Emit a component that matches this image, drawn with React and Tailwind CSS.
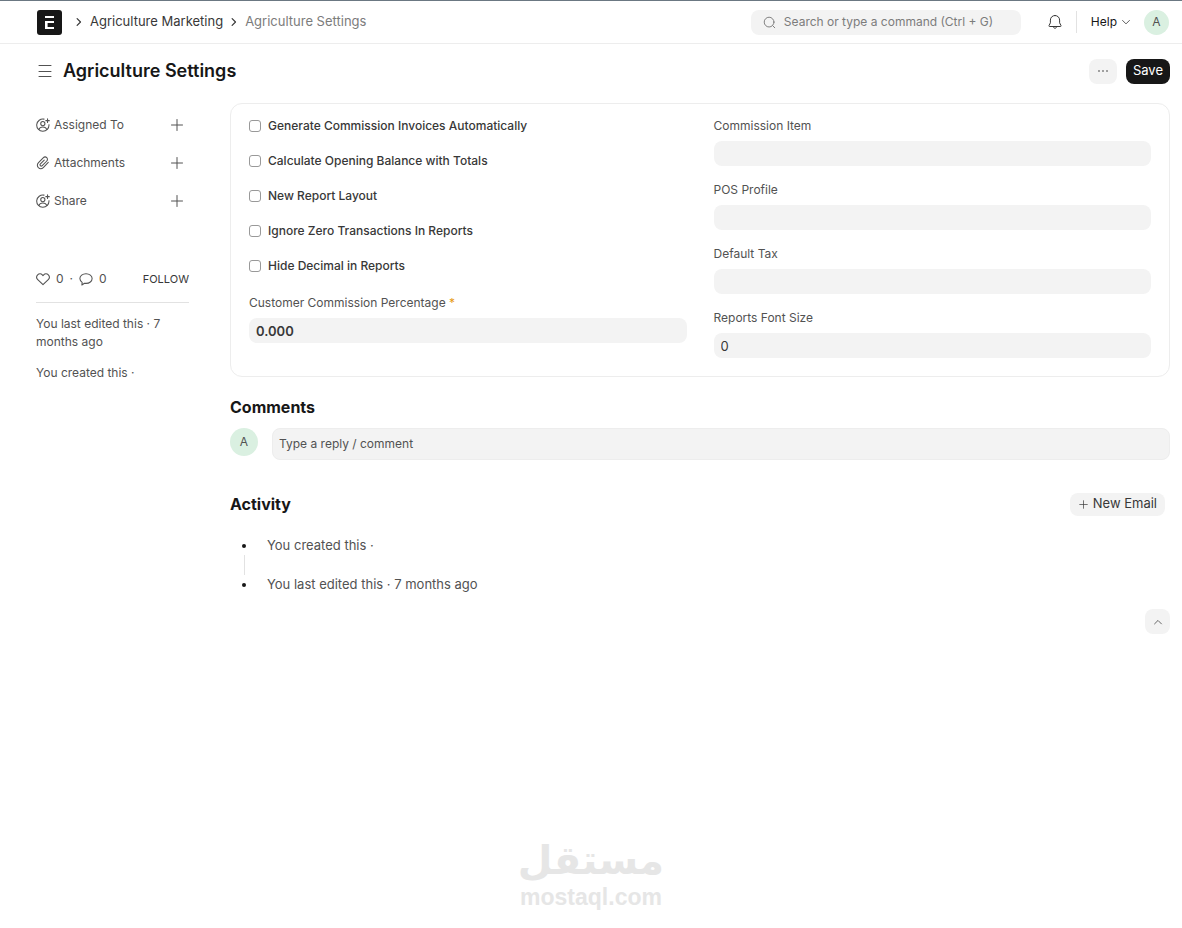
import { useState } from "react";

const checks = [
  { name: "auto_invoices", label: "Generate Commission Invoices Automatically" },
  { name: "opening_balance", label: "Calculate Opening Balance with Totals" },
  { name: "new_layout", label: "New Report Layout" },
  { name: "ignore_zero", label: "Ignore Zero Transactions In Reports" },
  { name: "hide_decimal", label: "Hide Decimal in Reports" },
];

const fields = [
  { name: "commission_item", label: "Commission Item" },
  { name: "pos_profile", label: "POS Profile" },
  { name: "default_tax", label: "Default Tax" },
  { name: "font_size", label: "Reports Font Size" },
];

function Icon({ className, children }) {
  return (
    <svg
      viewBox="0 0 16 16"
      fill="none"
      stroke="currentColor"
      strokeLinecap="round"
      strokeLinejoin="round"
      aria-hidden="true"
      className={`shrink-0 ${className}`}
    >
      {children}
    </svg>
  );
}

function PlusIcon({ className }) {
  return (
    <Icon className={className}>
      <path d="M8 2.5v11M2.5 8h11" />
    </Icon>
  );
}

function ChevronRight() {
  return (
    <Icon className="size-3 text-[#383838]">
      <path d="M5.500 3.500l4.500 4.500-4.500 4.500" strokeWidth="1.600" />
    </Icon>
  );
}

function AssignIcon() {
  return (
    <Icon className="size-[14px]">
      <path d="M9.2 1.3A7 7 0 1 0 14.8 7.6" strokeWidth="1.2" />
      <circle cx="7.8" cy="6.4" r="2.4" strokeWidth="1.2" />
      <path d="M3.2 13.2c.7-2 2.4-3 4.6-3s3.9 1 4.6 3" strokeWidth="1.2" />
      <path d="M13.2 1v4M11.2 3h4" strokeWidth="1.2" />
    </Icon>
  );
}

function ClipIcon() {
  return (
    <Icon className="size-[14px]">
      <path
        d="M14 7.3 8.6 12.9c-1.700 1.700-4.300 1.900-5.900.4-1.600-1.600-1.500-4.100.2-5.800l5.300-5.400c1.200-1.200 3-1.300 4.100-.2 1.100 1.100 1 2.900-.2 4.100L7.100 11c-.6.6-1.500.7-2.100.1-.6-.6-.5-1.500.1-2.100l4.300-4.400"
        strokeWidth="1.2"
      />
    </Icon>
  );
}

function SidebarItem({ icon, label }) {
  return (
    <li className="flex h-[38px] items-center gap-1 pr-1">
      {icon}
      <span className="flex-1">{label}</span>
      <button type="button" aria-label={`Add ${label}`} className="cursor-pointer">
        <PlusIcon className="size-4" />
      </button>
    </li>
  );
}

function Field({ name, label, value, onChange, required, bold }) {
  return (
    <div className="flex flex-col gap-[7px]">
      <label htmlFor={name} className="text-xs text-[#525252]">
        {label}
        {required && <span className="text-[#e79913]"> *</span>}
      </label>
      <input
        id={name}
        name={name}
        type="text"
        value={value}
        onChange={onChange}
        className={
          bold
            ? "h-[25px] w-full rounded-lg bg-[#f3f3f3] px-[7px] text-[13px] font-semibold text-[#383838]"
            : "h-[25px] w-full rounded-lg bg-[#f3f3f3] px-[7px] text-[13px] text-[#383838]"
        }
      />
    </div>
  );
}

export default function App() {
  const [form, setForm] = useState({
    commission_item: "",
    pos_profile: "",
    default_tax: "",
    font_size: "0",
    commission_percentage: "0.000",
  });

  const handleChange = (e) => {
    setForm((prev) => ({ ...prev, [e.target.name]: e.target.value }));
  };

  return (
    <div className="flex min-h-screen flex-col border-t border-[#6b7882] bg-white font-[Inter,sans-serif] text-[13px] text-[#383838]">
      {/* Navbar */}
      <header className="flex h-[43px] items-center border-b border-[#ededed] pr-[13px] pl-[37px]">
        <a href="#home" aria-label="Home">
          <svg viewBox="0 0 25 25" className="size-[25px]" aria-hidden="true">
            <rect width="25" height="25" rx="3" fill="#171717" />
            <path d="M8 6h9v2H8zM8 11h9v2h-6.400v4H17v2H8z" fill="#fff" />
          </svg>
        </a>
        <nav className="ml-[11px] flex items-center gap-[5px]">
          <ChevronRight />
          <a href="#marketing">Agriculture Marketing</a>
          <ChevronRight />
          <a href="#settings" className="text-[#7c7c7c]">
            Agriculture Settings
          </a>
        </nav>

        <div className="ml-auto flex items-center">
          <label className="flex h-[25px] w-[270px] items-center gap-2 rounded-lg bg-[#f3f3f3] px-3 text-[#7c7c7c]">
            <Icon className="size-[13px]">
              <circle cx="7.5" cy="7.5" r="6" strokeWidth="1.2" />
              <path d="M12 12l2.500 2.500" strokeWidth="1.2" />
            </Icon>
            <input
              type="search"
              aria-label="Search"
              placeholder="Search or type a command (Ctrl + G)"
              className="min-w-0 flex-1 text-xs outline-none placeholder:text-[#7c7c7c]"
            />
          </label>
          <button type="button" aria-label="Notifications" className="ml-[26px] cursor-pointer">
            <Icon className="size-4">
              <path d="M8 1.5c-2.700 0-4.600 2-4.600 4.600v2.700L2 11.600c-.2.500 0 .9.500.9h11c.5 0 .7-.4.500-.9l-1.400-2.800V6.100c0-2.600-1.900-4.600-4.600-4.600z" />
              <path d="M6.300 12.700c.2 1 .8 1.500 1.700 1.500s1.500-.5 1.700-1.500" />
            </Icon>
          </button>
          <div className="ml-[13px] h-[22px] w-px bg-[#e2e2e2]" />
          <button
            type="button"
            className="ml-[14px] flex cursor-pointer items-center gap-1 text-xs text-[#171717]"
          >
            Help
            <Icon className="size-[10px] text-[#525252]">
              <path d="M2.500 5.500l5.500 5.500 5.500-5.500" strokeWidth="1.500" />
            </Icon>
          </button>
          <span className="ml-[13px] flex size-[25px] items-center justify-center rounded-full bg-[#daf0e1] text-xs text-[#525252]">
            A
          </span>
        </div>
      </header>

      {/* Page head */}
      <div className="flex h-[54px] items-center pr-3 pl-[37px]">
        <button type="button" aria-label="Toggle sidebar" className="cursor-pointer">
          <Icon className="size-4 text-[#525252]">
            <path d="M2 2.500h12M2 8.500h12M2 13.500h12" />
          </Icon>
        </button>
        <h1 className="ml-[10px] text-lg font-semibold text-[#171717]">Agriculture Settings</h1>
        <div className="ml-auto flex gap-[9px]">
          <button
            type="button"
            aria-label="Menu"
            className="flex h-[25px] w-7 cursor-pointer items-center justify-center rounded-lg bg-[#f3f3f3]"
          >
            <svg viewBox="0 0 10 2" className="h-[2px] w-[10px]" fill="currentColor" aria-hidden="true">
              <circle cx="1" cy="1" r="0.800" />
              <circle cx="5" cy="1" r="0.800" />
              <circle cx="9" cy="1" r="0.800" />
            </svg>
          </button>
          <button
            type="button"
            className="h-[25px] cursor-pointer rounded-lg bg-[#171717] px-[7px] text-[13px] text-white"
          >
            Save
          </button>
        </div>
      </div>

      <div className="flex gap-[41px] pt-[5px] pr-3 pl-9">
        {/* Sidebar */}
        <aside className="w-[153px] shrink-0 pt-[3px] text-xs text-[#525252]">
          <ul>
            <SidebarItem icon={<AssignIcon />} label="Assigned To" />
            <SidebarItem icon={<ClipIcon />} label="Attachments" />
            <SidebarItem icon={<AssignIcon />} label="Share" />
          </ul>
          <div className="mt-[51px] flex items-center border-b border-[#e2e2e2] pb-[15px]">
            <button type="button" className="flex cursor-pointer items-center gap-[6px]">
              <Icon className="size-[14px]">
                <path
                  d="M8 14.5 2 8.6C.5 7.100.5 4.700 1.900 3.200c1.500-1.500 3.900-1.500 5.300 0l.8.9.8-.9c1.400-1.500 3.800-1.500 5.300 0 1.400 1.500 1.400 3.900-.1 5.400z"
                  strokeWidth="1.2"
                />
              </Icon>
              0
            </button>
            <span className="px-[6px]">·</span>
            <button type="button" className="flex cursor-pointer items-center gap-[6px]">
              <Icon className="size-[14px]">
                <path
                  d="M8 2C4.100 2 1 4.400 1 7.500 1 9.300 2 10.800 3.600 11.800L3.300 14.800 6.300 12.800C6.900 12.900 7.400 13 8 13c3.900 0 7-2.400 7-5.500S11.900 2 8 2z"
                  strokeWidth="1.2"
                />
              </Icon>
              0
            </button>
            <button type="button" className="ml-auto cursor-pointer text-[11px] text-[#383838]">
              FOLLOW
            </button>
          </div>
          <p className="mt-3 leading-[18px]">You last edited this · 7 months ago</p>
          <p className="mt-[13px] leading-[18px]">You created this ·</p>
        </aside>

        <main className="min-w-0 flex-1">
          {/* Form */}
          <form className="grid grid-cols-2 gap-[27px] rounded-xl border border-[#ededed] px-[18px] pt-[14px] pb-[18px]">
            <div>
              <div className="flex flex-col gap-[19px]">
                {checks.map((c) => (
                  <label
                    key={c.name}
                    className="flex items-center gap-[7px] text-xs font-medium text-[#383838]"
                  >
                    <input
                      type="checkbox"
                      name={c.name}
                      className="size-3 appearance-none rounded-[3px] border border-[#999999] checked:bg-[#171717]"
                    />
                    {c.label}
                  </label>
                ))}
              </div>
              <div className="mt-[21px]">
                <Field
                  name="commission_percentage"
                  label="Customer Commission Percentage"
                  value={form.commission_percentage}
                  onChange={handleChange}
                  required
                  bold
                />
              </div>
            </div>
            <div className="flex flex-col gap-4">
              {fields.map((f) => (
                <Field
                  key={f.name}
                  name={f.name}
                  label={f.label}
                  value={form[f.name]}
                  onChange={handleChange}
                />
              ))}
            </div>
          </form>

          {/* Comments */}
          <section className="mt-[18px]">
            <h2 className="text-base font-bold text-[#171717]">Comments</h2>
            <div className="mt-[9px] flex gap-[14px]">
              <span className="flex size-7 shrink-0 items-center justify-center rounded-full bg-[#daf0e1] text-xs text-[#525252]">
                A
              </span>
              <input
                type="text"
                aria-label="Comment"
                placeholder="Type a reply / comment"
                className="h-8 min-w-0 flex-1 rounded-lg border border-[#ededed] bg-[#f3f3f3] px-[6px] pb-[2px] text-xs placeholder:text-[#525252]"
              />
            </div>
          </section>

          {/* Activity */}
          <section className="mt-8">
            <div className="flex items-center justify-between pr-[5px]">
              <h2 className="text-base font-bold text-[#171717]">Activity</h2>
              <button
                type="button"
                className="flex h-[23px] cursor-pointer items-center gap-1 rounded-lg bg-[#f3f3f3] px-2"
              >
                <PlusIcon className="size-[11px]" />
                New Email
              </button>
            </div>
            <ul className="mt-5 text-[13px] text-[#525252]">
              <li className="flex h-[39px] gap-[21px] pl-3">
                <span className="flex w-1 flex-col items-center pt-2">
                  <span className="size-1 shrink-0 rounded-full bg-[#171717]" />
                  <span className="mt-[7px] w-px flex-1 bg-[#e2e2e2]" />
                </span>
                <span className="leading-[18px]">You created this ·</span>
              </li>
              <li className="flex h-5 gap-[21px] pl-3">
                <span className="flex w-1 flex-col items-center pt-2">
                  <span className="size-1 rounded-full bg-[#171717]" />
                </span>
                <span className="leading-[18px]">You last edited this · 7 months ago</span>
              </li>
            </ul>
          </section>

          <div className="mt-[14px] flex justify-end">
            <button
              type="button"
              aria-label="Scroll to top"
              className="flex size-[25px] cursor-pointer items-center justify-center rounded-lg bg-[#f3f3f3]"
            >
              <Icon className="size-[10px] text-[#525252]">
                <path d="M2.500 11l5.500-5.500 5.500 5.500" strokeWidth="1.400" />
              </Icon>
            </button>
          </div>
        </main>
      </div>

      <footer className="mt-auto flex flex-col items-center pb-[18px] text-[#e6e6e6]">
        <span
          lang="ar"
          dir="rtl"
          className="font-['DejaVu_Sans',sans-serif] text-[40px] leading-[47px] font-bold"
        >
          مستقل
        </span>
        <span className="font-['Liberation_Sans',sans-serif] text-[23px] leading-[26px] font-bold">
          mostaql.com
        </span>
      </footer>
    </div>
  );
}
